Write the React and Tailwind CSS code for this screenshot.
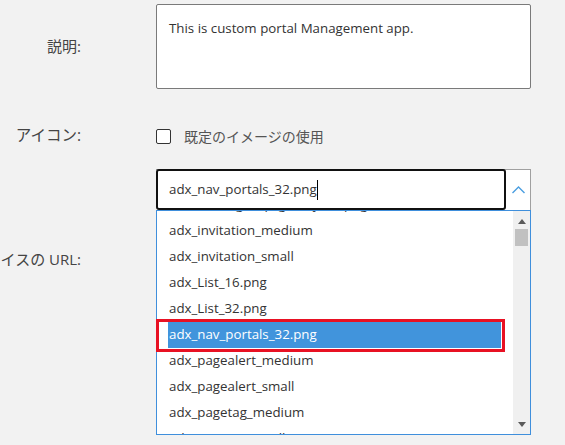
import { useState } from "react";

const items = [
	"adx_ideas_group_gallery_32.png",
	"adx_invitation_medium",
	"adx_invitation_small",
	"adx_List_16.png",
	"adx_List_32.png",
	"adx_nav_portals_32.png",
	"adx_pagealert_medium",
	"adx_pagealert_small",
	"adx_pagetag_medium",
	"adx_pagetag_small",
];

const font = {
	fontFamily: '"Open Sans", "Noto Sans CJK JP", sans-serif',
};

const App = () => {
	const [value] = useState("adx_nav_portals_32.png");
	const selected = "adx_nav_portals_32.png";

	return (
		<div
			className="relative w-[565px] h-[445px] overflow-hidden bg-[#f2f2f2] text-[#333]"
			style={font}
		>
			<div className="pt-[4px]">
				{/* Description */}
				<div className="grid grid-cols-[81px_375px] gap-x-[75px]">
					<div className="flex items-center justify-end text-[15px] text-[#444]">
						説明:
					</div>
					<div className="h-[85px] bg-white border border-[#7a7a7a] rounded-[2px] pl-[12px] pt-[13px] text-[13.3px] leading-[20px]">
						This is custom portal Management app.
					</div>
				</div>

				{/* Icon */}
				<div className="grid grid-cols-[81px_375px] gap-x-[75px] mt-[32px] h-[30px]">
					<div className="flex items-center justify-end text-[15.5px] text-[#444]">
						アイコン:
					</div>
					<label className="flex items-center gap-[13px] text-[14px] text-[#555]">
						<span className="w-[15px] h-[15px] bg-white border border-[#333] rounded-[2px]"></span>
						既定のイメージの使用
					</label>
				</div>

				{/* Combo */}
				<div className="grid grid-cols-[81px_375px] gap-x-[75px] mt-[18px]">
					<div></div>
					<div className="relative z-10">
						<div className="flex h-[41px] bg-white border-t border-r border-[#a0a0a0]">
							<div className="w-[350px] -mt-px flex items-center border-2 border-[#111] rounded-[3px] pl-[11px] text-[13.3px] bg-white">
								<span>{value}</span>
								<span className="w-px h-[20px] bg-black"></span>
							</div>
							<div className="flex-1 flex items-center justify-center">
								<svg width="13" height="8" viewBox="0 0 13 8">
									<polyline
										points="0.5,7 6.5,1 12.5,7"
										fill="none"
										stroke="#4a9ee0"
										strokeWidth="1.4"
									/>
								</svg>
							</div>
						</div>

						{/* Dropdown */}
						<div className="absolute left-0 top-full w-[375px] h-[225px] bg-white border border-[#3f8fdc] flex">
							<div className="flex-1 overflow-hidden">
								<div className="-mt-[19px]">
									{items.map((item) =>
										item === selected ? (
											<div key={item} className="h-[26px] flex pl-[11px] pr-[12px]">
												<div className="flex-1 flex items-center pl-px bg-[#4194dc] text-white text-[13.3px]">
													{item}
												</div>
											</div>
										) : (
											<div
												key={item}
												className="h-[26px] flex items-center pl-[12px] text-[13.3px] text-[#333]"
											>
												{item}
											</div>
										)
									)}
								</div>
							</div>
							<div className="w-[17px] bg-[#f0f0f0] flex flex-col items-center">
								<svg className="mt-[8px]" width="8" height="5" viewBox="0 0 8 5">
									<polygon points="0,5 4,0 8,5" fill="#5a5a5a" />
								</svg>
								<div className="mt-[5px] w-[13px] h-[17px] bg-[#c1c1c1]"></div>
								<div className="flex-1"></div>
								<svg className="mb-[7px]" width="8" height="5" viewBox="0 0 8 5">
									<polygon points="0,0 8,0 4,5" fill="#5a5a5a" />
								</svg>
							</div>

							{/* annotation */}
							<div className="absolute -left-px top-[108px] w-[349px] h-[33px] border-[3px] border-[#e81123]"></div>
						</div>
					</div>
				</div>

				{/* URL */}
				<div className="grid grid-cols-[81px_375px] gap-x-[75px] mt-[34px] h-[30px]">
					<div className="flex items-center justify-end whitespace-nowrap text-[15px] text-[#444]">
						インターフェイスの URL:
					</div>
					<div className="bg-white border border-[#7a7a7a]"></div>
				</div>
			</div>
		</div>
	);
};

export default App;
